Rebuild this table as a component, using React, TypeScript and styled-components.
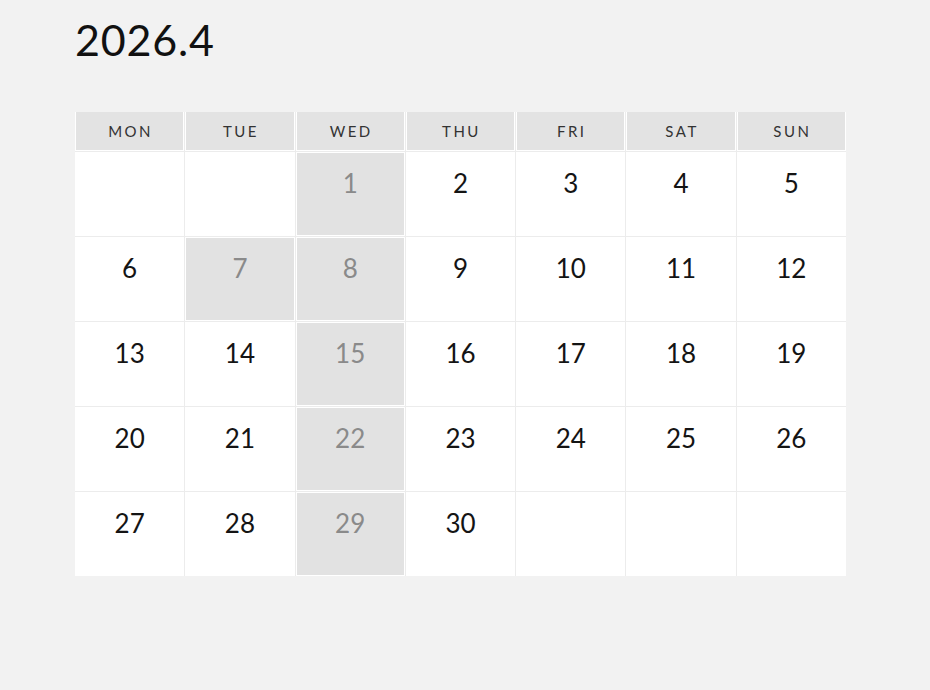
import React from "react";
import styled, { createGlobalStyle } from "styled-components";

const Global = createGlobalStyle`
  html, body {
    margin: 0;
    padding: 0;
    background: #f2f2f2;
  }
  body {
    font-family: Lato, "Open Sans", sans-serif;
    color: #1a1a1a;
  }
`;

const Page = styled.div`
  width: 930px;
  height: 690px;
  box-sizing: border-box;
  padding: 21px 0 0 75px;
  background: #f2f2f2;
`;

const Title = styled.h1`
  margin: 0 0 54px 0;
  font-family: Lato, sans-serif;
  font-weight: 400;
  font-size: 43px;
  line-height: 37px;
  color: #111;
  letter-spacing: 0.8px;
`;

const Grid = styled.div`
  display: grid;
  width: 771px;
  grid-template-columns: repeat(7, 1fr);
  grid-template-rows: 39px repeat(5, 84px);
  gap: 1px;
  background: #ececec;
`;

const HeadCell = styled.div`
  display: flex;
  align-items: center;
  justify-content: center;
  background: #e3e3e3;
  border: 1px solid #ffffff;
  border-top: none;
  font-size: 15px;
  letter-spacing: 2.5px;
  padding-left: 2px;
  color: #333333;
`;

const DayCell = styled.div<{ $off: boolean }>`
  display: flex;
  justify-content: center;
  align-items: flex-start;
  box-sizing: border-box;
  padding-top: 15px;
  border: 1px solid #ffffff;
  background: ${(p) => (p.$off ? "#e2e2e2" : "#ffffff")};
  color: ${(p) => (p.$off ? "#8a8a8a" : "#141414")};
  font-size: 26px;
  line-height: 30px;
`;

const days = ["MON", "TUE", "WED", "THU", "FRI", "SAT", "SUN"];
const offDays = new Set([1, 7, 8, 15, 22, 29]);

export default function App() {
  const cells: (number | null)[] = [];
  for (let i = 0; i < 2; i++) cells.push(null);
  for (let d = 1; d <= 30; d++) cells.push(d);
  while (cells.length < 35) cells.push(null);

  return (
    <>
      <Global />
      <Page>
        <Title>2026.4</Title>
        <Grid>
          {days.map((d) => (
            <HeadCell key={d}>{d}</HeadCell>
          ))}
          {cells.map((d, i) => (
            <DayCell key={i} $off={d !== null && offDays.has(d)}>
              {d ?? ""}
            </DayCell>
          ))}
        </Grid>
      </Page>
    </>
  );
}
